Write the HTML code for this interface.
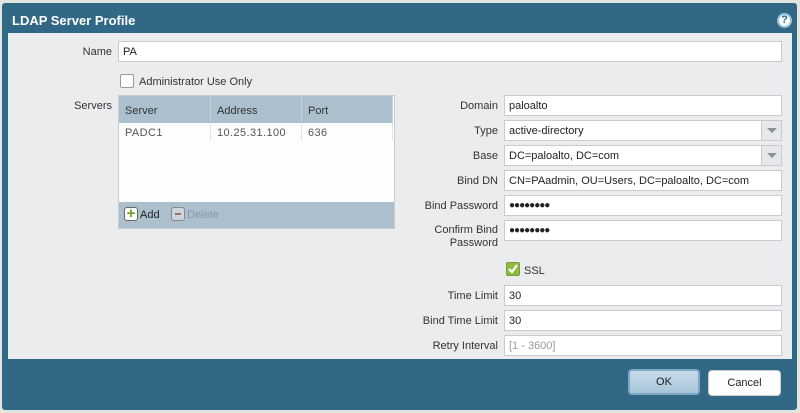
<!DOCTYPE html>
<html><head><meta charset="utf-8"><style>
*{box-sizing:border-box;margin:0;padding:0}
body{width:800px;height:413px;background:#e3e6e0;font-family:"Liberation Sans",sans-serif;font-size:11px;color:#333;position:relative;overflow:hidden}
.dlg{position:absolute;left:2px;top:3px;width:795px;height:407px;background:#316886;border-radius:3px}
.title{position:absolute;left:10px;top:10px;color:#fff;font-weight:bold;font-size:13px}
.help{position:absolute;left:775px;top:10px;width:15px;height:15px;border-radius:50%;background:#fff;border:2px solid #9cc3db;color:#316886;font-weight:bold;font-size:11px;text-align:center;line-height:11px}
.content{position:absolute;left:8px;top:33px;width:784px;height:326px;background:#ebecee}
.lbl{position:absolute;text-align:right;color:#333;margin-top:1px}
.in{position:absolute;background:#fff;border:1px solid #c9cbcd;height:21px;padding:4px 4px;color:#222;white-space:nowrap}
.arrow{position:absolute;right:0;top:0;width:20px;height:19px;background:#e6e8ea;border-left:1px solid #c9cbcd}
.arrow:after{content:"";position:absolute;left:5px;top:7px;border-left:5px solid transparent;border-right:5px solid transparent;border-top:5px solid #8c9298}
.cb{position:absolute;width:14px;height:14px;background:#fff;border:1px solid #999;border-radius:2px}
.tbl{position:absolute;left:118px;top:95px;width:277px;height:134px;border:1px solid #c9cbcd;background:#fcfdfd}
.th{position:absolute;top:0;height:27px;background:#abbfcc;border-right:1px solid #c5d3dc;padding:9px 6px;color:#333}
.td{position:absolute;top:27px;height:18px;padding:4px 6px;color:#555;border-right:1px solid #e2e4e6;letter-spacing:.4px}
.tb{position:absolute;left:0;bottom:0;width:275px;height:26px;background:#abbfcc}
.btn{position:absolute;height:26px;border-radius:4px;text-align:center;line-height:23px;font-size:11px;color:#222}
</style></head><body>
<div class="dlg">
<div class="title">LDAP Server Profile</div>
<div class="help">?</div>
</div>
<div class="content"></div>
<div class="lbl" style="left:40px;top:45px;width:72px">Name</div>
<div class="in" style="left:118px;top:41px;width:664px">PA</div>
<div class="cb" style="left:120px;top:74px"></div>
<div class="lbl" style="left:139px;top:75px;text-align:left">Administrator Use Only</div>
<div class="lbl" style="left:40px;top:99px;width:72px">Servers</div>
<div class="tbl">
<div class="th" style="left:0;width:92px">Server</div>
<div class="th" style="left:92px;width:91px">Address</div>
<div class="th" style="left:183px;width:91px">Port</div>
<div class="td" style="left:0;width:92px">PADC1</div>
<div class="td" style="left:92px;width:91px">10.25.31.100</div>
<div class="td" style="left:183px;width:91px">636</div>
<div class="tb">
<div style="position:absolute;left:5px;top:5px;width:14px;height:14px;border:1px solid #666;border-radius:3px;background:#fff;color:#6a9e1e;font-weight:bold;font-size:15px;line-height:11px;text-align:center">+</div>
<div style="position:absolute;left:21px;top:7px;color:#222">Add</div>
<div style="position:absolute;left:52px;top:5px;width:14px;height:14px;border:1px solid #888;border-radius:3px;background:#ccd6dc;"><div style="position:absolute;left:3px;top:5px;width:6px;height:2px;background:#a06a60"></div></div>
<div style="position:absolute;left:68px;top:7px;color:#8899a4">Delete</div>
</div>
</div>

<div class="lbl" style="left:400px;top:99px;width:98px">Domain</div>
<div class="in" style="left:504px;top:95px;width:278px">paloalto</div>
<div class="lbl" style="left:400px;top:124px;width:98px">Type</div>
<div class="in" style="left:504px;top:120px;width:278px">active-directory<div class="arrow"></div></div>
<div class="lbl" style="left:400px;top:149px;width:98px">Base</div>
<div class="in" style="left:504px;top:145px;width:278px">DC=paloalto, DC=com<div class="arrow"></div></div>
<div class="lbl" style="left:400px;top:174px;width:98px">Bind DN</div>
<div class="in" style="left:504px;top:170px;width:278px">CN=PAadmin, OU=Users, DC=paloalto, DC=com</div>
<div class="lbl" style="left:400px;top:199px;width:98px">Bind Password</div>
<div class="in" style="left:504px;top:195px;width:278px;font-size:10px;font-weight:bold;letter-spacing:-1px">●●●●●●●●</div>
<div class="lbl" style="left:400px;top:223px;width:98px;line-height:13px">Confirm Bind<br>Password</div>
<div class="in" style="left:504px;top:220px;width:278px;font-size:10px;font-weight:bold;letter-spacing:-1px">●●●●●●●●</div>
<div class="cb" style="left:506px;top:262px;background:#8cbc3a;border-color:#7a9a4a"><svg width="12" height="12" viewBox="0 0 12 12" style="position:absolute;left:0;top:0"><path d="M2 6 L5 9 L10 2" stroke="#fff" stroke-width="2.2" fill="none"/></svg></div>
<div class="lbl" style="left:524px;top:264px;text-align:left">SSL</div>
<div class="lbl" style="left:400px;top:289px;width:98px">Time Limit</div>
<div class="in" style="left:504px;top:285px;width:278px">30</div>
<div class="lbl" style="left:400px;top:314px;width:98px">Bind Time Limit</div>
<div class="in" style="left:504px;top:310px;width:278px">30</div>
<div class="lbl" style="left:400px;top:339px;width:98px">Retry Interval</div>
<div class="in" style="left:504px;top:335px;width:278px;color:#999">[1 - 3600]</div>

<div class="btn" style="left:628px;top:369px;width:72px;background:linear-gradient(#c8dcea,#a6c4d8);border:2px solid #7fa9c4">OK</div>
<div class="btn" style="left:708px;top:370px;width:73px;background:#fff;border:1px solid #ccc;line-height:24px">Cancel</div>
</body></html>
